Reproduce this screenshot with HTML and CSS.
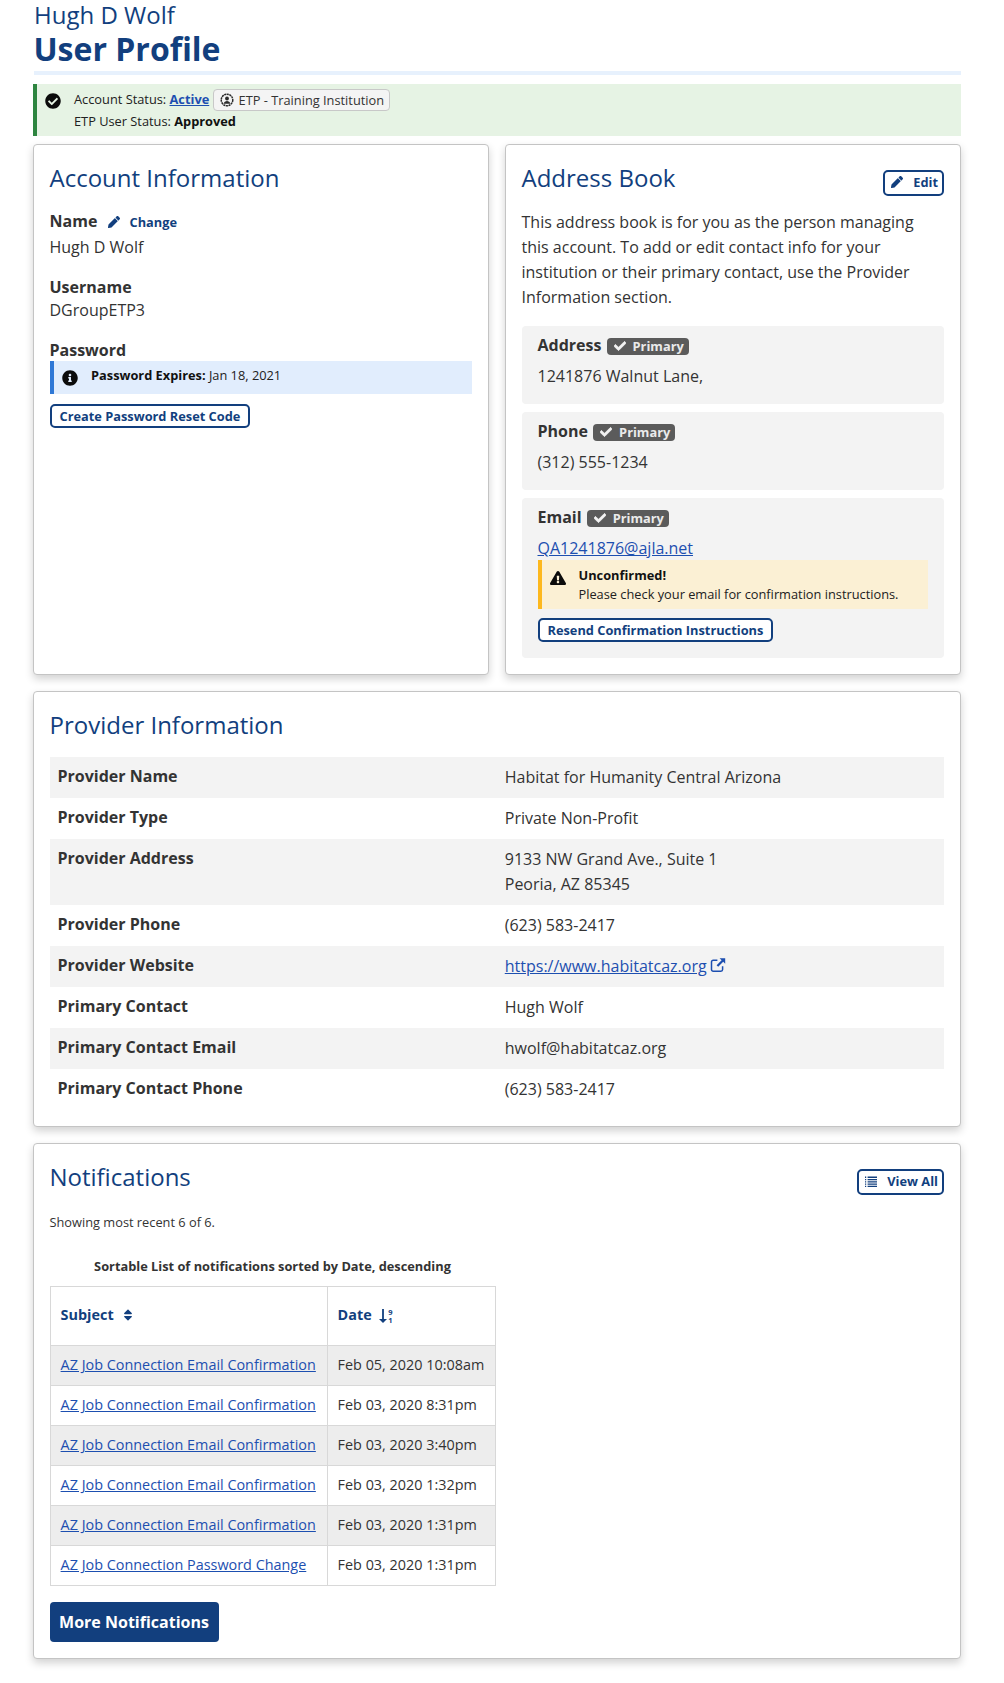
FILE: index.html
```html
<!DOCTYPE html>
<html lang="en">
<head>
<meta charset="utf-8">
<title>User Profile</title>
<link rel="stylesheet" href="styles.css">
</head>
<body>
<svg class="defs" width="0" height="0" aria-hidden="true">
  <symbol id="i-check-circle" viewBox="0 0 512 512"><path d="M504 256c0 136.967-111.033 248-248 248S8 392.967 8 256 119.033 8 256 8s248 111.033 248 248zM227.314 387.314l184-184c6.248-6.248 6.248-16.379 0-22.627l-22.627-22.627c-6.248-6.249-16.379-6.249-22.628 0L216 308.118l-70.059-70.059c-6.248-6.248-16.379-6.248-22.628 0l-22.627 22.627c-6.248 6.248-6.248 16.379 0 22.627l104 104c6.249 6.249 16.379 6.249 22.628.001z"/></symbol>
  <symbol id="i-info" viewBox="0 0 512 512"><path d="M256 8C119.043 8 8 119.083 8 256c0 136.997 111.043 248 248 248s248-111.003 248-248C504 119.083 392.957 8 256 8zm0 110c23.196 0 42 18.804 42 42s-18.804 42-42 42-42-18.804-42-42 18.804-42 42-42zm56 254c0 6.627-5.373 12-12 12h-88c-6.627 0-12-5.373-12-12v-24c0-6.627 5.373-12 12-12h12v-64h-12c-6.627 0-12-5.373-12-12v-24c0-6.627 5.373-12 12-12h64c6.627 0 12 5.373 12 12v100h12c6.627 0 12 5.373 12 12v24z"/></symbol>
  <symbol id="i-warn" viewBox="0 0 576 512"><path d="M569.517 440.013C587.975 472.007 564.806 512 527.94 512H48.054c-36.937 0-59.999-40.055-41.577-71.987L246.423 23.985c18.467-32.009 64.72-31.951 83.154 0l239.94 416.028zM288 354c-25.405 0-46 20.595-46 46s20.595 46 46 46 46-20.595 46-46-20.595-46-46-46zm-43.673-165.346l7.418 136c.347 6.364 5.609 11.346 11.982 11.346h48.546c6.373 0 11.635-4.982 11.982-11.346l7.418-136c.375-6.874-5.098-12.654-11.982-12.654h-63.383c-6.884 0-12.356 5.78-11.981 12.654z"/></symbol>
  <symbol id="i-check" viewBox="0 0 512 512"><path d="M173.898 439.404l-166.4-166.4c-9.997-9.997-9.997-26.206 0-36.204l36.203-36.204c9.997-9.998 26.207-9.998 36.204 0L192 312.69 432.095 72.596c9.997-9.997 26.207-9.997 36.204 0l36.203 36.204c9.997 9.997 9.997 26.206 0 36.204l-294.4 294.401c-9.998 9.997-26.207 9.997-36.204-.001z"/></symbol>
  <symbol id="i-pencil" viewBox="0 0 512 512"><path d="M497.9 142.1l-46.1 46.1c-4.7 4.7-12.3 4.7-17 0l-111-111c-4.7-4.7-4.7-12.3 0-17l46.1-46.1c18.7-18.7 49.1-18.7 67.9 0l60.1 60.1c18.8 18.7 18.8 49.1 0 67.9zM284.2 99.8L21.6 362.4.4 483.9c-2.9 16.4 11.4 30.6 27.8 27.8l121.5-21.3 262.6-262.6c4.7-4.7 4.7-12.3 0-17l-111-111c-4.8-4.7-12.4-4.7-17.1 0z"/></symbol>
  <symbol id="i-sort" viewBox="0 0 320 512"><path d="M41 288h238c21.4 0 32.1 25.9 17 41L177 448c-9.4 9.4-24.6 9.4-33.9 0L24 329c-15.1-15.1-4.4-41 17-41zm255-105L177 64c-9.4-9.4-24.6-9.4-33.9 0L24 183c-15.1 15.1-4.4 41 17 41h238c21.4 0 32.1-25.9 17-41z"/></symbol>
</svg>

<main class="page">
  <header class="page-head">
    <div class="page-name">Hugh D Wolf</div>
    <h1 class="page-title">User Profile</h1>
  </header>

  <div class="alert alert-success">
    <svg class="alert-icon"><use href="#i-check-circle"/></svg>
    <div class="alert-body">
      <div class="status-line">Account Status: <a class="link strong" href="#">Active</a>
        <span class="role-chip">
          <svg class="role-icon" viewBox="0 0 16 16"><circle cx="8" cy="8" r="6.6" fill="none" stroke="#2a2a2a" stroke-width="1.7" stroke-dasharray="2.4 .6"/><circle cx="8" cy="6.3" r="2.2" fill="#2a2a2a"/><path d="M4.2 12.4c.4-2.4 2-3.4 3.8-3.4s3.4 1 3.8 3.4z" fill="#2a2a2a"/></svg>
          ETP - Training Institution</span>
      </div>
      <div>ETP User Status: <b>Approved</b></div>
    </div>
  </div>

  <div class="two-col">
    <section class="card">
      <h2 class="card-title">Account Information</h2>
      <div class="field field-name">
        <div class="field-label">Name <a class="change-link" href="#"><svg class="ico-pencil"><use href="#i-pencil"/></svg>Change</a></div>
        <div class="field-value">Hugh D Wolf</div>
      </div>
      <div class="field">
        <div class="field-label">Username</div>
        <div class="field-value">DGroupETP3</div>
      </div>
      <div class="field">
        <div class="field-label">Password</div>
        <div class="alert alert-info">
          <svg class="alert-icon"><use href="#i-info"/></svg>
          <div class="alert-body"><b>Password Expires:</b> Jan 18, 2021</div>
        </div>
        <a class="btn-outline" href="#">Create Password Reset Code</a>
      </div>
    </section>

    <section class="card">
      <div class="card-head">
        <h2 class="card-title">Address Book</h2>
        <a class="btn-outline btn-icon" href="#"><svg class="ico-pencil"><use href="#i-pencil"/></svg>Edit</a>
      </div>
      <p class="intro">This address book is for you as the person managing this account. To add or edit contact info for your institution or their primary contact, use the Provider Information section.</p>

      <div class="contact">
        <div class="contact-head"><span class="contact-label">Address</span> <span class="badge"><svg class="ico-check"><use href="#i-check"/></svg>Primary</span></div>
        <div class="contact-value">1241876 Walnut Lane,</div>
      </div>
      <div class="contact">
        <div class="contact-head"><span class="contact-label">Phone</span> <span class="badge"><svg class="ico-check"><use href="#i-check"/></svg>Primary</span></div>
        <div class="contact-value">(312) 555-1234</div>
      </div>
      <div class="contact contact-email">
        <div class="contact-head"><span class="contact-label">Email</span> <span class="badge"><svg class="ico-check"><use href="#i-check"/></svg>Primary</span></div>
        <div class="contact-value"><a class="link" href="#">QA1241876@ajla.net</a></div>
        <div class="alert alert-warning">
          <svg class="alert-icon"><use href="#i-warn"/></svg>
          <div class="alert-body"><b>Unconfirmed!</b><br>Please check your email for confirmation instructions.</div>
        </div>
        <a class="btn-outline btn-after-warning" href="#">Resend Confirmation Instructions</a>
      </div>
    </section>
  </div>

  <section class="card card-wide">
    <h2 class="card-title">Provider Information</h2>
    <table class="info-table">
      <tbody>
        <tr><th>Provider Name</th><td>Habitat for Humanity Central Arizona</td></tr>
        <tr><th>Provider Type</th><td>Private Non-Profit</td></tr>
        <tr><th>Provider Address</th><td>9133 NW Grand Ave., Suite 1<br>Peoria, AZ 85345</td></tr>
        <tr><th>Provider Phone</th><td>(623) 583-2417</td></tr>
        <tr><th>Provider Website</th><td><a class="link" href="#">https://www.habitatcaz.org</a><svg class="ico-ext" viewBox="0 0 16 16"><path d="M12.6 9.2v3.3a1.7 1.7 0 0 1-1.7 1.7H3.2a1.7 1.7 0 0 1-1.7-1.7V5a1.7 1.7 0 0 1 1.7-1.7h4.2" fill="none" stroke="#1d4fb0" stroke-width="1.5"/><path d="M9.6 1.2h5.6v5.6l-2-2-5 5-1.6-1.6 5-5z" fill="#1d4fb0"/></svg></td></tr>
        <tr><th>Primary Contact</th><td>Hugh Wolf</td></tr>
        <tr><th>Primary Contact Email</th><td>hwolf@habitatcaz.org</td></tr>
        <tr><th>Primary Contact Phone</th><td>(623) 583-2417</td></tr>
      </tbody>
    </table>
  </section>

  <section class="card card-wide">
    <div class="card-head">
      <h2 class="card-title">Notifications</h2>
      <a class="btn-outline btn-icon" href="#"><svg class="ico-list" viewBox="0 0 12 12"><path d="M0 .6h1.2v1.3H0zM2.6 .6H12v1.3H2.6zM0 2.9h1.2v1.3H0zM2.6 2.9H12v1.3H2.6zM0 5.2h1.2v1.3H0zM2.6 5.2H12v1.3H2.6zM0 7.5h1.2v1.3H0zM2.6 7.5H12v1.3H2.6zM0 9.8h1.2v1.3H0zM2.6 9.8H12v1.3H2.6z" fill="#123f7e"/></svg>View All</a>
    </div>
    <p class="showing">Showing most recent 6 of 6.</p>
    <table class="notes-table">
      <caption>Sortable List of notifications sorted by Date, descending</caption>
      <thead>
        <tr>
          <th class="col-subject">Subject<svg class="ico-sort"><use href="#i-sort"/></svg></th>
          <th class="col-date">Date<span class="sort-num"><svg class="ico-down" viewBox="0 0 8 14"><path d="M3.1 0h1.8v10H8l-4 4-4-4h3.1z" fill="#123f7e"/></svg><span class="digits">9<br>1</span></span></th>
        </tr>
      </thead>
      <tbody>
        <tr><td><a class="link" href="#">AZ Job Connection Email Confirmation</a></td><td>Feb 05, 2020 10:08am</td></tr>
        <tr><td><a class="link" href="#">AZ Job Connection Email Confirmation</a></td><td>Feb 03, 2020 8:31pm</td></tr>
        <tr><td><a class="link" href="#">AZ Job Connection Email Confirmation</a></td><td>Feb 03, 2020 3:40pm</td></tr>
        <tr><td><a class="link" href="#">AZ Job Connection Email Confirmation</a></td><td>Feb 03, 2020 1:32pm</td></tr>
        <tr><td><a class="link" href="#">AZ Job Connection Email Confirmation</a></td><td>Feb 03, 2020 1:31pm</td></tr>
        <tr><td><a class="link" href="#">AZ Job Connection Password Change</a></td><td>Feb 03, 2020 1:31pm</td></tr>
      </tbody>
    </table>
    <a class="btn-solid" href="#">More Notifications</a>
  </section>
</main>
</body>
</html>
```
FILE: styles.css
```css
* { box-sizing: border-box; }
html, body { margin: 0; padding: 0; background: #fff; }
body { font-family: "Open Sans", sans-serif; font-size: 16px; line-height: 25px; color: #333; }
.defs { position: absolute; }
.page { padding: 0 43px 24px 33px; }

.page-head { border-bottom: 4px solid #e7f1fd; margin: 0 0 9px 1px; height: 75px; }
.page-name { font-size: 24px; line-height: 30px; color: #123f7e; }
.page-title { margin: 0 0 0 -.6px; font-size: 32px; line-height: 37px; font-weight: 700; color: #123f7e; }

.alert { display: flex; border-left: 4px solid; }
.alert b { color: #111; }
.alert-icon { flex: none; fill: #0b0b0b; width: 16px; height: 16px; }
.alert-success { background: #e6f3e4; border-color: #2e8540; height: 52px; padding: 4px 8px 0 8px; font-size: 12.8px; line-height: 22px; color: #212121; }
.alert-success .alert-icon { margin: 5px 13px 0 0; }
.status-line { white-space: nowrap; height: 22px; }
.link { color: #1d4fb0; text-decoration: underline; }
.strong { font-weight: 700; }
.role-chip { display: inline-flex; align-items: center; height: 22px; padding: 0 5px 0 6px; border: 1px solid #c8c8c8; border-radius: 4px; background: #f4f4f4; color: #333; vertical-align: -3px; }
.role-icon { width: 14px; height: 14px; margin-right: 5px; }

.two-col { display: grid; grid-template-columns: 1fr 1fr; gap: 16px; margin-top: 8px; }
.card { background: #fff; border: 1px solid #c4c4c4; border-radius: 4px; box-shadow: 0 4px 8px rgba(0,0,0,.18); padding: 16px 16px 16px 15.5px; }
.card-wide { margin-top: 16px; }
.card-title { margin: 1px 0 0; font-size: 24px; line-height: 32px; font-weight: 400; color: #123f7e; }
.card-head { display: flex; justify-content: space-between; align-items: flex-start; }

.field { margin-top: 17px; }
.field-name { margin-top: 15px; }
.field-label { font-weight: 700; color: #333; line-height: 24px; }
.field-value { line-height: 22px; }
.field-name .field-value { margin-top: 2px; }
.change-link { font-size: 12.8px; color: #123f7e; margin-left: 6px; text-decoration: none; }
.ico-pencil { width: 12px; height: 12px; fill: #123f7e; margin-right: 10px; vertical-align: -1px; }
.alert-info { background: #e1edfd; border-color: #2f78d6; height: 33px; margin-top: -1px; padding: 5px 8px 4px 8.5px; font-size: 12.8px; line-height: 18px; color: #212121; }
.alert-info .alert-icon { margin: 4px 13px 0 0; }
.btn-outline { display: inline-block; margin-top: 10px; border: 2px solid #123f7e; border-radius: 5px; background: #fff; padding: 0 8px; font-size: 12.8px; line-height: 20px; font-weight: 700; color: #123f7e; text-decoration: none; }
.btn-after-warning { margin-top: 9px; }
.btn-icon { margin-top: 9px; padding: 0 4px 1px 6px; line-height: 21px; }
.card-head .btn-icon { flex: none; }

.intro { margin: 14px 0 16px; }
.contact { background: #f3f3f3; border-radius: 4px; padding: 6px 16px 12px; height: 78px; margin-top: 8px; }
.contact-email { height: 160px; }
.contact-head { line-height: 26px; }
.contact-label { font-weight: 700; }
.contact-value { margin-top: 6px; }
.badge { display: inline-block; background: #5b5b5b; color: #eaeaea; border-radius: 4px; font-size: 12.8px; font-weight: 700; line-height: 17px; padding: 0 5px 0 7px; margin-left: 1px; vertical-align: 0; }
.ico-check { width: 12px; height: 12px; fill: #f2f2f2; stroke: #f2f2f2; stroke-width: 30px; margin-right: 7px; vertical-align: -1px; }
.alert-warning { background: #fbf0d4; border-color: #fdb81e; height: 49px; margin-top: -1px; padding: 6px 8px; font-size: 12.8px; line-height: 19px; color: #212121; }
.alert-warning .alert-icon { margin: 4px 13px 0 0; }

.info-table { width: 100%; border-collapse: collapse; table-layout: fixed; margin-top: 16px; }
.info-table th, .info-table td { width: 50%; padding: 8px; text-align: left; vertical-align: top; }
.info-table th { padding: 7px 8px 9px; font-weight: 700; color: #333; }
.info-table tr:nth-child(odd) { background: #f3f3f3; }
.ico-ext { width: 16px; height: 16px; margin-left: 3px; vertical-align: -1px; }

.showing { margin: 16px 0 0; font-size: 12.8px; line-height: 22px; }
.notes-table { border-collapse: collapse; margin-top: 22px; width: 446px; table-layout: fixed; font-size: 14.4px; }
.notes-table caption { caption-side: top; font-size: 12.8px; font-weight: 700; line-height: 22px; padding-bottom: 9px; text-align: center; }
.notes-table th, .notes-table td { border: 1px solid #d8d8d8; padding: 0 9.6px 2px 10.1px; height: 40px; text-align: left; white-space: nowrap; }
.notes-table th { height: 59px; padding-bottom: 4px; font-weight: 700; color: #123f7e; }
.col-subject { width: 277px; }
.notes-table tbody tr:nth-child(odd) { background: #ededed; }
.ico-sort { width: 10px; height: 14px; fill: #123f7e; margin-left: 9px; vertical-align: -2px; }
.sort-num { display: inline-flex; align-items: center; margin-left: 7.5px; vertical-align: -3px; }
.ico-down { width: 8px; height: 14px; }
.ico-list { width: 12px; height: 12px; margin-right: 10px; vertical-align: -2px; }
.digits { font-size: 7.5px; line-height: 8px; font-weight: 700; margin-left: 1px; color: #123f7e; text-align: center; }
.btn-solid { display: block; width: 169px; margin-top: 16px; background: #123f7e; color: #fff; border-radius: 4px; height: 40px; line-height: 40px; font-weight: 700; text-align: center; text-decoration: none; white-space: nowrap; }
```
